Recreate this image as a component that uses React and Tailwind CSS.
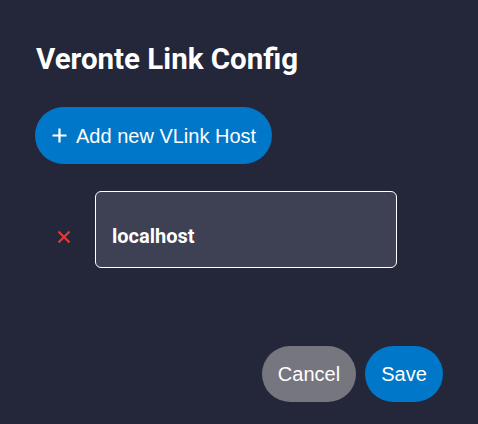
import React from "react";

export default function App() {
  return (
    <div className="w-[478px] h-[424px] bg-[#24263a] overflow-hidden" style={{ fontFamily: "Roboto, sans-serif" }}>
      <div className="pt-[41px] pl-[36px]">
        <h1 className="text-[29.5px] leading-[36px] font-bold text-white">Veronte Link Config</h1>
      </div>
      <div className="pl-[35px] pt-[30px]">
        <button
          className="h-[57px] pl-[17px] pr-[16px] rounded-full bg-[#0077c8] text-white flex items-center gap-[9px] text-[20px]"
          style={{ fontFamily: '"Liberation Sans", Arial, sans-serif' }}
        >
          <svg width="15" height="15" viewBox="0 0 15 15" className="shrink-0">
            <path d="M7.5 0.5v14M0.5 7.5h14" stroke="white" strokeWidth="2.2" />
          </svg>
          <span>Add new VLink Host</span>
        </button>
      </div>
      <div className="flex items-center pt-[27px] pl-[57px]">
        <svg width="14" height="14" viewBox="0 0 14 14" className="shrink-0 mt-[14px]">
          <path d="M1.5 1.5l11 11M12.5 1.5l-11 11" stroke="#e53935" strokeWidth="2.2" />
        </svg>
        <div className="ml-[24px] w-[302px] h-[77px] rounded-[6px] border border-white bg-[#3e4053] flex items-center pl-[16px] pt-[13px]">
          <span className="text-white font-bold text-[20px]">localhost</span>
        </div>
      </div>
      <div className="flex justify-end gap-[9px] pr-[35px] pt-[78px]">
        <button
          className="h-[56px] w-[94px] rounded-full bg-[#76767f] text-white text-[20px]"
          style={{ fontFamily: '"Liberation Sans", Arial, sans-serif' }}
        >
          Cancel
        </button>
        <button
          className="h-[56px] w-[78px] rounded-full bg-[#0077c8] text-white text-[20px]"
          style={{ fontFamily: '"Liberation Sans", Arial, sans-serif' }}
        >
          Save
        </button>
      </div>
    </div>
  );
}
